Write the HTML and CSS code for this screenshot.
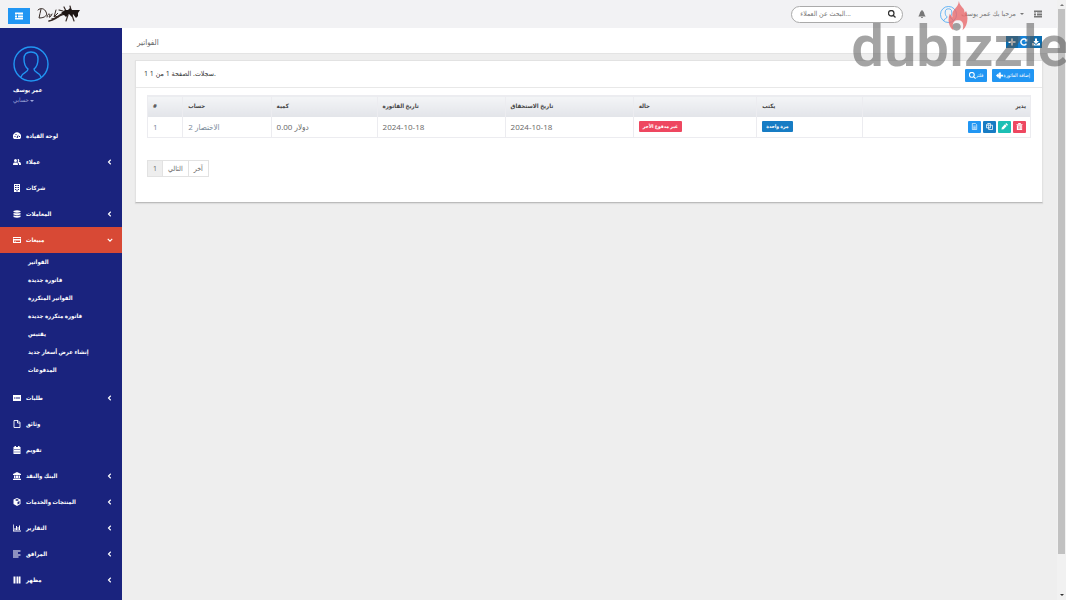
FILE: index.html
```
<!DOCTYPE html>
<html lang="ar" dir="ltr">
<head>
<meta charset="utf-8">
<title>الفواتير</title>
<link rel="stylesheet" href="styles.css">
</head>
<body>
<svg class="defs" aria-hidden="true">
  <symbol id="user" viewBox="0 0 36 36"><g fill="none" stroke="#2196f3" stroke-width="1.4"><circle cx="18" cy="18" r="17"/><path d="M8 31c1-5 7-4 7-8-4-3-4-7-4-10 0-5 3-7 7-7s7 2 7 7c0 3 0 7-4 10 0 4 6 3 7 8"/></g></symbol>
  <symbol id="indent" viewBox="0 0 16 16"><path d="M0 1h16v3H0zM6 5h10v2H6zM6 8h10v3H6zM0 12h16v3H0zM0 5h4v2H0zM0 8h4v3H0z"/></symbol>
  <symbol id="dash" viewBox="0 0 16 16"><path fill-rule="evenodd" d="M2 14a8 8 0 1 1 12 0zM7 11a2 2 0 0 0 3 0l1-6-3 4zM3 8h2v2H3zM5 4h2v2H5zM12 8h2v2h-2z"/></symbol>
  <symbol id="users" viewBox="0 0 16 16"><circle cx="5" cy="5" r="3"/><path d="M0 14c0-5 2-5 5-5s5 0 5 5z"/><path d="M9 2c4-1 5 4 2 6 4 0 5 1 5 6h-4c0-3-1-5-3-5 1-2 1-5 0-7z"/></symbol>
  <symbol id="building" viewBox="0 0 16 16"><path fill-rule="evenodd" d="M2 0h12v16H2zM4 2v2h2V2zm3 0v2h2V2zm3 0v2h2V2zM4 6v2h2V6zm3 0v2h2V6zm3 0v2h2V6zM4 10v2h2v-2zm6 0v2h2v-2zm-3 1v4h2v-4z"/></symbol>
  <symbol id="database" viewBox="0 0 16 16"><path d="M1 2q7-3 14 0v2q-7 3-14 0zM1 6q7 1 14 0v3q-7 3-14 0zM1 11q7 1 14 0v3q-7 3-14 0z"/></symbol>
  <symbol id="card" viewBox="0 0 16 16"><path fill-rule="evenodd" d="M0 2h16v12H0zM1 4v2h14V4zm1 5v3h12V9z"/><path d="M3 10h3v1H3z"/></symbol>
  <symbol id="grid" viewBox="0 0 16 16"><path fill-rule="evenodd" d="M0 2h16v12H0zM2 6v1h3V6zm4 0v1h8V6zM2 9v1h3V9zm4 0v1h8V9z"/></symbol>
  <symbol id="file" viewBox="0 0 16 16"><path d="M2 1h8l4 4v10H2zM9 1v5h5" fill="none" stroke="currentColor" stroke-width="1.8"/></symbol>
  <symbol id="calendar" viewBox="0 0 16 16"><path fill-rule="evenodd" d="M1 2h2V0h3v2h4V0h3v2h2v14H1zM3 6v2h2V6zm4 0v2h2V6zm4 0v2h2V6zm-8 5v2h2v-2zm4 0v2h2v-2zm4 0v2h2v-2z"/></symbol>
  <symbol id="bank" viewBox="0 0 16 16"><path d="M8 0l8 4v2H0V4zM2 7h3v5h1V7h4v5h1V7h3v5h1v1H1v-1h1zM0 14h16v2H0z"/></symbol>
  <symbol id="cube" viewBox="0 0 16 16"><path fill-rule="evenodd" d="M8 0l7 3v9l-7 4-7-4V3zM8 2L4 4l4 2 4-2zm1 6v5l4-2V6z"/></symbol>
  <symbol id="chart" viewBox="0 0 16 16"><path d="M0 1h1.500v12H16v2H0zM3 8h2v4H3zM6 4h2v8H6zM9 6h2v6H9zM12 3h2v9h-2z"/></symbol>
  <symbol id="align" viewBox="0 0 16 16"><path d="M0 1h15v2H0zM0 5h10v2H0zM0 9h15v2H0zM0 13h11v2H0z"/></symbol>
  <symbol id="bars" viewBox="0 0 16 16"><path d="M1 1h3v14H1zM5 1h2v14H5zM8 1h3v14H8zM12 1h3v14h-3z"/></symbol>
  <symbol id="chev" viewBox="0 0 16 16"><path d="M10 2L4 8l6 6" fill="none" stroke="currentColor" stroke-width="3"/></symbol>
  <symbol id="chevdown" viewBox="0 0 16 16"><path d="M2 5l6 6 6-6" fill="none" stroke="currentColor" stroke-width="3"/></symbol>
  <symbol id="search" viewBox="0 0 16 16"><path d="M10.500 10.500L15 15M12 6.500a5.500 5.500 0 1 1-11 0 5.500 5.500 0 0 1 11 0z" fill="none" stroke="currentColor" stroke-width="2.600"/></symbol>
  <symbol id="bell" viewBox="0 0 16 16"><path d="M7 0h2v2c4 1 3 7 6 10v1H1v-1c3-3 2-9 6-10zM6 14h4c0 3-4 3-4 0z"/></symbol>
  <symbol id="plus" viewBox="0 0 16 16"><path d="M6 1h4v5h5v4h-5v5H6v-5H1V6h5z"/></symbol>
  <symbol id="reload" viewBox="0 0 16 16"><path d="M13 11a6 6 0 1 1 0-6" fill="none" stroke="currentColor" stroke-width="3"/><path d="M15 1v6H9z"/></symbol>
  <symbol id="download" viewBox="0 0 16 16"><path d="M6 1h4v5h4l-6 6-6-6h4zM0 10h3l5 4 5-4h3v5H0z"/></symbol>
  <symbol id="reply" viewBox="0 0 16 16"><path d="M0 8l6-6v4h10v4H6v4z"/><path d="M7 1h4v14H7z"/></symbol>
  <symbol id="filetext" viewBox="0 0 16 16"><path d="M3 1h7l3 3v11H3zM5 7h6M5 10h6M5 13h6" fill="none" stroke="currentColor" stroke-width="1.500"/></symbol>
  <symbol id="copy" viewBox="0 0 16 16"><path d="M10 11H1V4l3-3h6zM6 5h9v10H6zM1 5h4V1" fill="none" stroke="currentColor" stroke-width="1.800"/></symbol>
  <symbol id="pencil" viewBox="0 0 16 16"><path d="M1 15l1-5 7-7 4 4-7 7zM10 2l2-2 4 4-2 2z"/></symbol>
  <symbol id="trash" viewBox="0 0 16 16"><path fill-rule="evenodd" d="M1 2h4V0h6v2h4v2H1zM2 5h12v11H2zM5 7v7h1V7zm3 0v7h1V7zm3 0v7h1V7z"/></symbol>
</svg>

<div class="app">
  <header class="topbar">
    <button class="toggle" aria-label="القائمة"><svg><use href="#indent"/></svg></button>
    <svg class="logo" viewBox="0 0 44 18" role="img" aria-label="الشعار">
      <g fill="none" stroke="#352a26" stroke-width="1" stroke-linecap="round">
        <path d="M4 4c-1 3-1 6-2 9 6 0 9-3 7-6C8 4 4 2 1 5M10 12c0-3 3-4 3-2l-1 2c1 1 2-1 3-3M19 5l-2 7 4-4-3 3 3 1"/>
        <path d="M12 16c6-1 11-5 16-9M15 14c4 0 7-4 10-5" stroke-width="1.600"/>
        <path d="M29 6l-2-4M34 5l-1-4M31 10l-2 6M35 10l2 6M26 6l-4-1" stroke-width="1.200"/>
      </g>
      <path fill="#1c1513" d="M24 8l4-3 3 0 2-2 2 2 3 0 5 0-2 3 0 3-2 2-3-4-1 3-3-3-3 3-2-2-4 1 3-2z"/>
    </svg>
    <div class="search">
      <input type="text" aria-label="بحث" placeholder="البحث عن العملاء...">
      <button aria-label="ابحث"><svg><use href="#search"/></svg></button>
    </div>
    <button class="bell" aria-label="تنبيهات"><svg><use href="#bell"/></svg></button>
    <button class="account"><svg class="avatar-sm"><use href="#user"/></svg><span>مرحبا بك عمر يوسف</span><i class="caret"></i></button>
    <button class="more" aria-label="المزيد"><svg><use href="#indent"/></svg></button>
  </header>

  <div class="body">
    <nav class="sidebar">
      <div class="profile">
        <svg class="avatar"><use href="#user"/></svg>
        <strong>عمر يوسف</strong>
        <a href="#">حسابي <i class="caret"></i></a>
      </div>
      <ul class="menu">
        <li><a href="#"><svg><use href="#dash"/></svg><span>لوحة القيادة</span></a></li>
        <li><a href="#"><svg><use href="#users"/></svg><span>عملاء</span><svg class="chev"><use href="#chev"/></svg></a></li>
        <li><a href="#"><svg><use href="#building"/></svg><span>شركات</span></a></li>
        <li><a href="#"><svg><use href="#database"/></svg><span>المعاملات</span><svg class="chev"><use href="#chev"/></svg></a></li>
        <li><a href="#" class="active"><svg><use href="#card"/></svg><span>مبيعات</span><svg class="chev"><use href="#chevdown"/></svg></a>
          <ul class="submenu">
            <li><a href="#">الفواتير</a></li>
            <li><a href="#">فاتورة جديدة</a></li>
            <li><a href="#">الفواتير المتكررة</a></li>
            <li><a href="#">فاتورة متكررة جديدة</a></li>
            <li><a href="#">يقتبس</a></li>
            <li><a href="#">إنشاء عرض أسعار جديد</a></li>
            <li><a href="#">المدفوعات</a></li>
          </ul>
        </li>
        <li><a href="#"><svg><use href="#grid"/></svg><span>طلبات</span><svg class="chev"><use href="#chev"/></svg></a></li>
        <li><a href="#"><svg><use href="#file"/></svg><span>وثائق</span></a></li>
        <li><a href="#"><svg><use href="#calendar"/></svg><span>تقويم</span></a></li>
        <li><a href="#"><svg><use href="#bank"/></svg><span>البنك والنقد</span><svg class="chev"><use href="#chev"/></svg></a></li>
        <li><a href="#"><svg><use href="#cube"/></svg><span>المنتجات والخدمات</span><svg class="chev"><use href="#chev"/></svg></a></li>
        <li><a href="#"><svg><use href="#chart"/></svg><span>التقارير</span><svg class="chev"><use href="#chev"/></svg></a></li>
        <li><a href="#"><svg><use href="#align"/></svg><span>المرافق</span><svg class="chev"><use href="#chev"/></svg></a></li>
        <li><a href="#"><svg><use href="#bars"/></svg><span>مظهر</span><svg class="chev"><use href="#chev"/></svg></a></li>
      </ul>
    </nav>

    <main class="main">
      <div class="titlebar">
        <h1>الفواتير</h1>
        <div class="group">
          <button aria-label="إضافة"><svg><use href="#plus"/></svg></button><button class="mid" aria-label="تحديث"><svg><use href="#reload"/></svg></button><button aria-label="تنزيل"><svg><use href="#download"/></svg></button>
        </div>
      </div>
      <section class="card">
        <div class="card-head">
          <p dir="rtl">.سجلات. الصفحة 1 من 1 1</p>
          <div class="actions">
            <button><svg><use href="#search"/></svg>فلتر</button>
            <button><svg><use href="#reply"/></svg>إضافة الفاتورة</button>
          </div>
        </div>
        <div class="card-body">
          <table>
            <colgroup><col class="c-id"><col class="c-account"><col class="c-amount"><col class="c-date"><col class="c-date"><col class="c-status"><col class="c-type"><col></colgroup>
            <thead><tr><th>#</th><th>حساب</th><th>كمية</th><th>تاريخ الفاتورة</th><th>تاريخ الاستحقاق</th><th>حالة</th><th>يكتب</th><th class="end">يدير</th></tr></thead>
            <tbody><tr>
              <td><a href="#">1</a></td><td><a href="#">الاختصار 2</a></td><td>0.00 دولار</td><td>2024-10-18</td><td>2024-10-18</td>
              <td><span class="tag red">غير مدفوع الأجر</span></td><td><span class="tag blue">مرة واحدة</span></td>
              <td class="end"><div class="tools">
                <button class="sky" aria-label="عرض"><svg><use href="#filetext"/></svg></button>
                <button class="blue" aria-label="نسخ"><svg><use href="#copy"/></svg></button>
                <button class="teal" aria-label="تعديل"><svg><use href="#pencil"/></svg></button>
                <button class="red" aria-label="حذف"><svg><use href="#trash"/></svg></button>
              </div></td>
            </tr></tbody>
          </table>
          <div class="pages"><a href="#" class="current">1</a><a href="#">التالي</a><a href="#">آخر</a></div>
        </div>
      </section>
    </main>
  </div>
</div>
<div class="scroll" aria-hidden="true"><i class="up"></i><div class="thumb"></div><i class="down"></i></div>
<div class="watermark"><span>dubizzle</span>
  <svg class="flame" viewBox="0 0 22 34"><path fill="#e8696b" fill-opacity=".8" fill-rule="evenodd" d="M12 0c1 7 7 7 6 13l2-2c3 9 1 17-4 21 2-7 0-11-5-11-5 0-7 4-5 11C1 29-1 21 2 14l3 4C3 9 11 9 12 0z"/></svg>
</div>
</body>
</html>
```

FILE: styles.css
```
* { box-sizing: border-box; }
body {
  margin: 0;
  display: flex;
  height: 100vh;
  overflow: hidden;
  background: #eee;
  color: #666;
  font: 7px/10px "Open Sans", "DejaVu Sans Condensed", "DejaVu Sans", sans-serif;
}
a { color: inherit; text-decoration: none; }
button { border: 0; padding: 0; background: none; color: inherit; font: inherit; display: flex; align-items: center; justify-content: center; }
ul { list-style: none; margin: 0; padding: 0; }
svg { width: 8px; height: 8px; fill: currentColor; flex: none; display: block; }
.defs { position: absolute; width: 0; height: 0; }
.caret { display: inline-block; border: 2px solid transparent; border-top-color: currentColor; border-bottom: 0; }
.app { flex: 1; min-width: 0; display: flex; flex-direction: column; }

.topbar { display: flex; align-items: center; height: 28px; padding: 0 15px 0 8px; background: #f2f2f4; flex: none; }
.toggle { width: 22px; height: 16px; margin-top: 4px; background: #2196f3; color: #fff; }
.logo { width: 44px; height: 18px; margin-left: 7px; }
.search { display: flex; align-items: center; width: 112px; height: 17px; margin-left: auto; padding: 0 6px 0 8px; border: 1px solid #aaa; border-radius: 9px; background: #fff; color: #333; }
.search input { flex: 1; min-width: 0; border: 0; padding: 0; outline: 0; background: none; font: inherit; }
.search input::placeholder { color: #777; opacity: 1; }
.bell { margin-left: 15px; color: #777; }
.account { gap: 4px; margin-left: 14px; color: #777; }
.avatar-sm { width: 17px; height: 17px; }
.more { margin-left: 10px; color: #777; }

.body { flex: 1; min-height: 0; display: flex; }
.sidebar { width: 122px; flex: none; background: #1a237e; color: #fff; overflow: hidden; }
.profile { height: 95px; padding: 18px 13px 0; display: flex; flex-direction: column; align-items: flex-start; }
.profile strong { margin-top: 3px; font-size: 6px; }
.profile a { color: #9fa8da; font-size: 6px; }
.avatar { width: 36px; height: 36px; }
.menu { font-size: 6px; font-weight: 700; }
.menu > li > a { display: flex; align-items: center; gap: 5px; height: 26px; padding: 0 9px 0 13px; }
.menu .active { background: #d84935; }
.menu .chev { width: 6px; height: 6px; margin-left: auto; }
.submenu { padding-bottom: 6px; }
.submenu a { display: block; padding-left: 28px; line-height: 18px; }

.main { flex: 1; min-width: 0; }
.titlebar { display: flex; align-items: center; justify-content: space-between; height: 26px; padding: 3px 15px 0; background: #fff; border-bottom: 1px solid #e4e4e4; }
h1 { margin: 0; font-size: 8px; font-weight: 400; line-height: 12px; }
.group { display: flex; color: #fff; }
.group button { width: 12px; height: 12px; background: #0b6daf; }
.group .mid { background: #1583d8; }
.card { margin: 6px 14px 0 13px; border: 1px solid #e2e2e2; border-bottom: 1px solid #bbb; box-shadow: 0 1px 1px #ddd; background: #fff; }
.card-head { display: flex; align-items: center; justify-content: space-between; height: 27px; padding: 0 8px; border-bottom: 1px solid #e8e8e8; color: #333; }
.card-head p { margin: 0; }
.actions { display: flex; gap: 5px; padding-top: 2px; color: #fff; font-size: 5px; }
.actions button { height: 13px; padding: 0 4px; background: #2196f3; border-radius: 1px; }
.actions svg { width: 7px; height: 7px; }
.card-body { padding: 7px 11px 25px; }

table { width: 100%; border-collapse: collapse; table-layout: fixed; border: 1px solid #ececf0; }
.c-id { width: 4%; }
.c-account { width: 10%; }
.c-amount { width: 12%; }
.c-date { width: 14.5%; }
.c-status { width: 14%; }
.c-type { width: 12%; }
th, td { height: 21px; padding: 0 4px 0 5px; text-align: left; border-right: 1px solid #ececf0; }
th { background: linear-gradient(#f4f5f7, #e2e4e9); color: #444; font-size: 6px; font-weight: 700; }
td { font-size: 8px; }
td a { color: #789; }
.end { text-align: right; }
.tag { display: inline-block; padding: 0 4px; border-radius: 1px; color: #fff; font-size: 5px; font-weight: 700; line-height: 11px; vertical-align: middle; }
.red { background: #ee4760; }
.blue { background: #177cc4; }
.sky { background: #2196f3; }
.teal { background: #1cbfb4; }
.tools { display: flex; justify-content: flex-end; gap: 2px; color: #fff; }
.tools button { width: 13px; height: 12px; border-radius: 1px; }
.tools svg { width: 7px; height: 7px; }
.pages { display: inline-flex; margin-top: 22px; border: 1px solid #e2e2e2; }
.pages a { padding: 0 5px; line-height: 15px; border-left: 1px solid #e2e2e2; }
.pages .current { background: #eee; border-left: 0; }

.scroll { width: 9px; height: 100%; display: flex; flex-direction: column; align-items: center; padding: 4px 1px; background: #f1f1f1; color: #555; }
.thumb { width: 100%; height: 92%; margin-top: 3px; background: #c1c1c1; }
.up, .down { border: 2px solid transparent; }
.up { border-top: 0; border-bottom-color: #777; }
.down { margin-top: auto; border-bottom: 0; border-top-color: #333; }

.watermark { position: absolute; top: 0; right: -3px; color: rgb(90 90 90 / 55%); font: 600 58px/92px Roboto, sans-serif; pointer-events: none; }
.flame { position: absolute; top: 0; left: 97px; width: 20px; height: 33px; }
```
